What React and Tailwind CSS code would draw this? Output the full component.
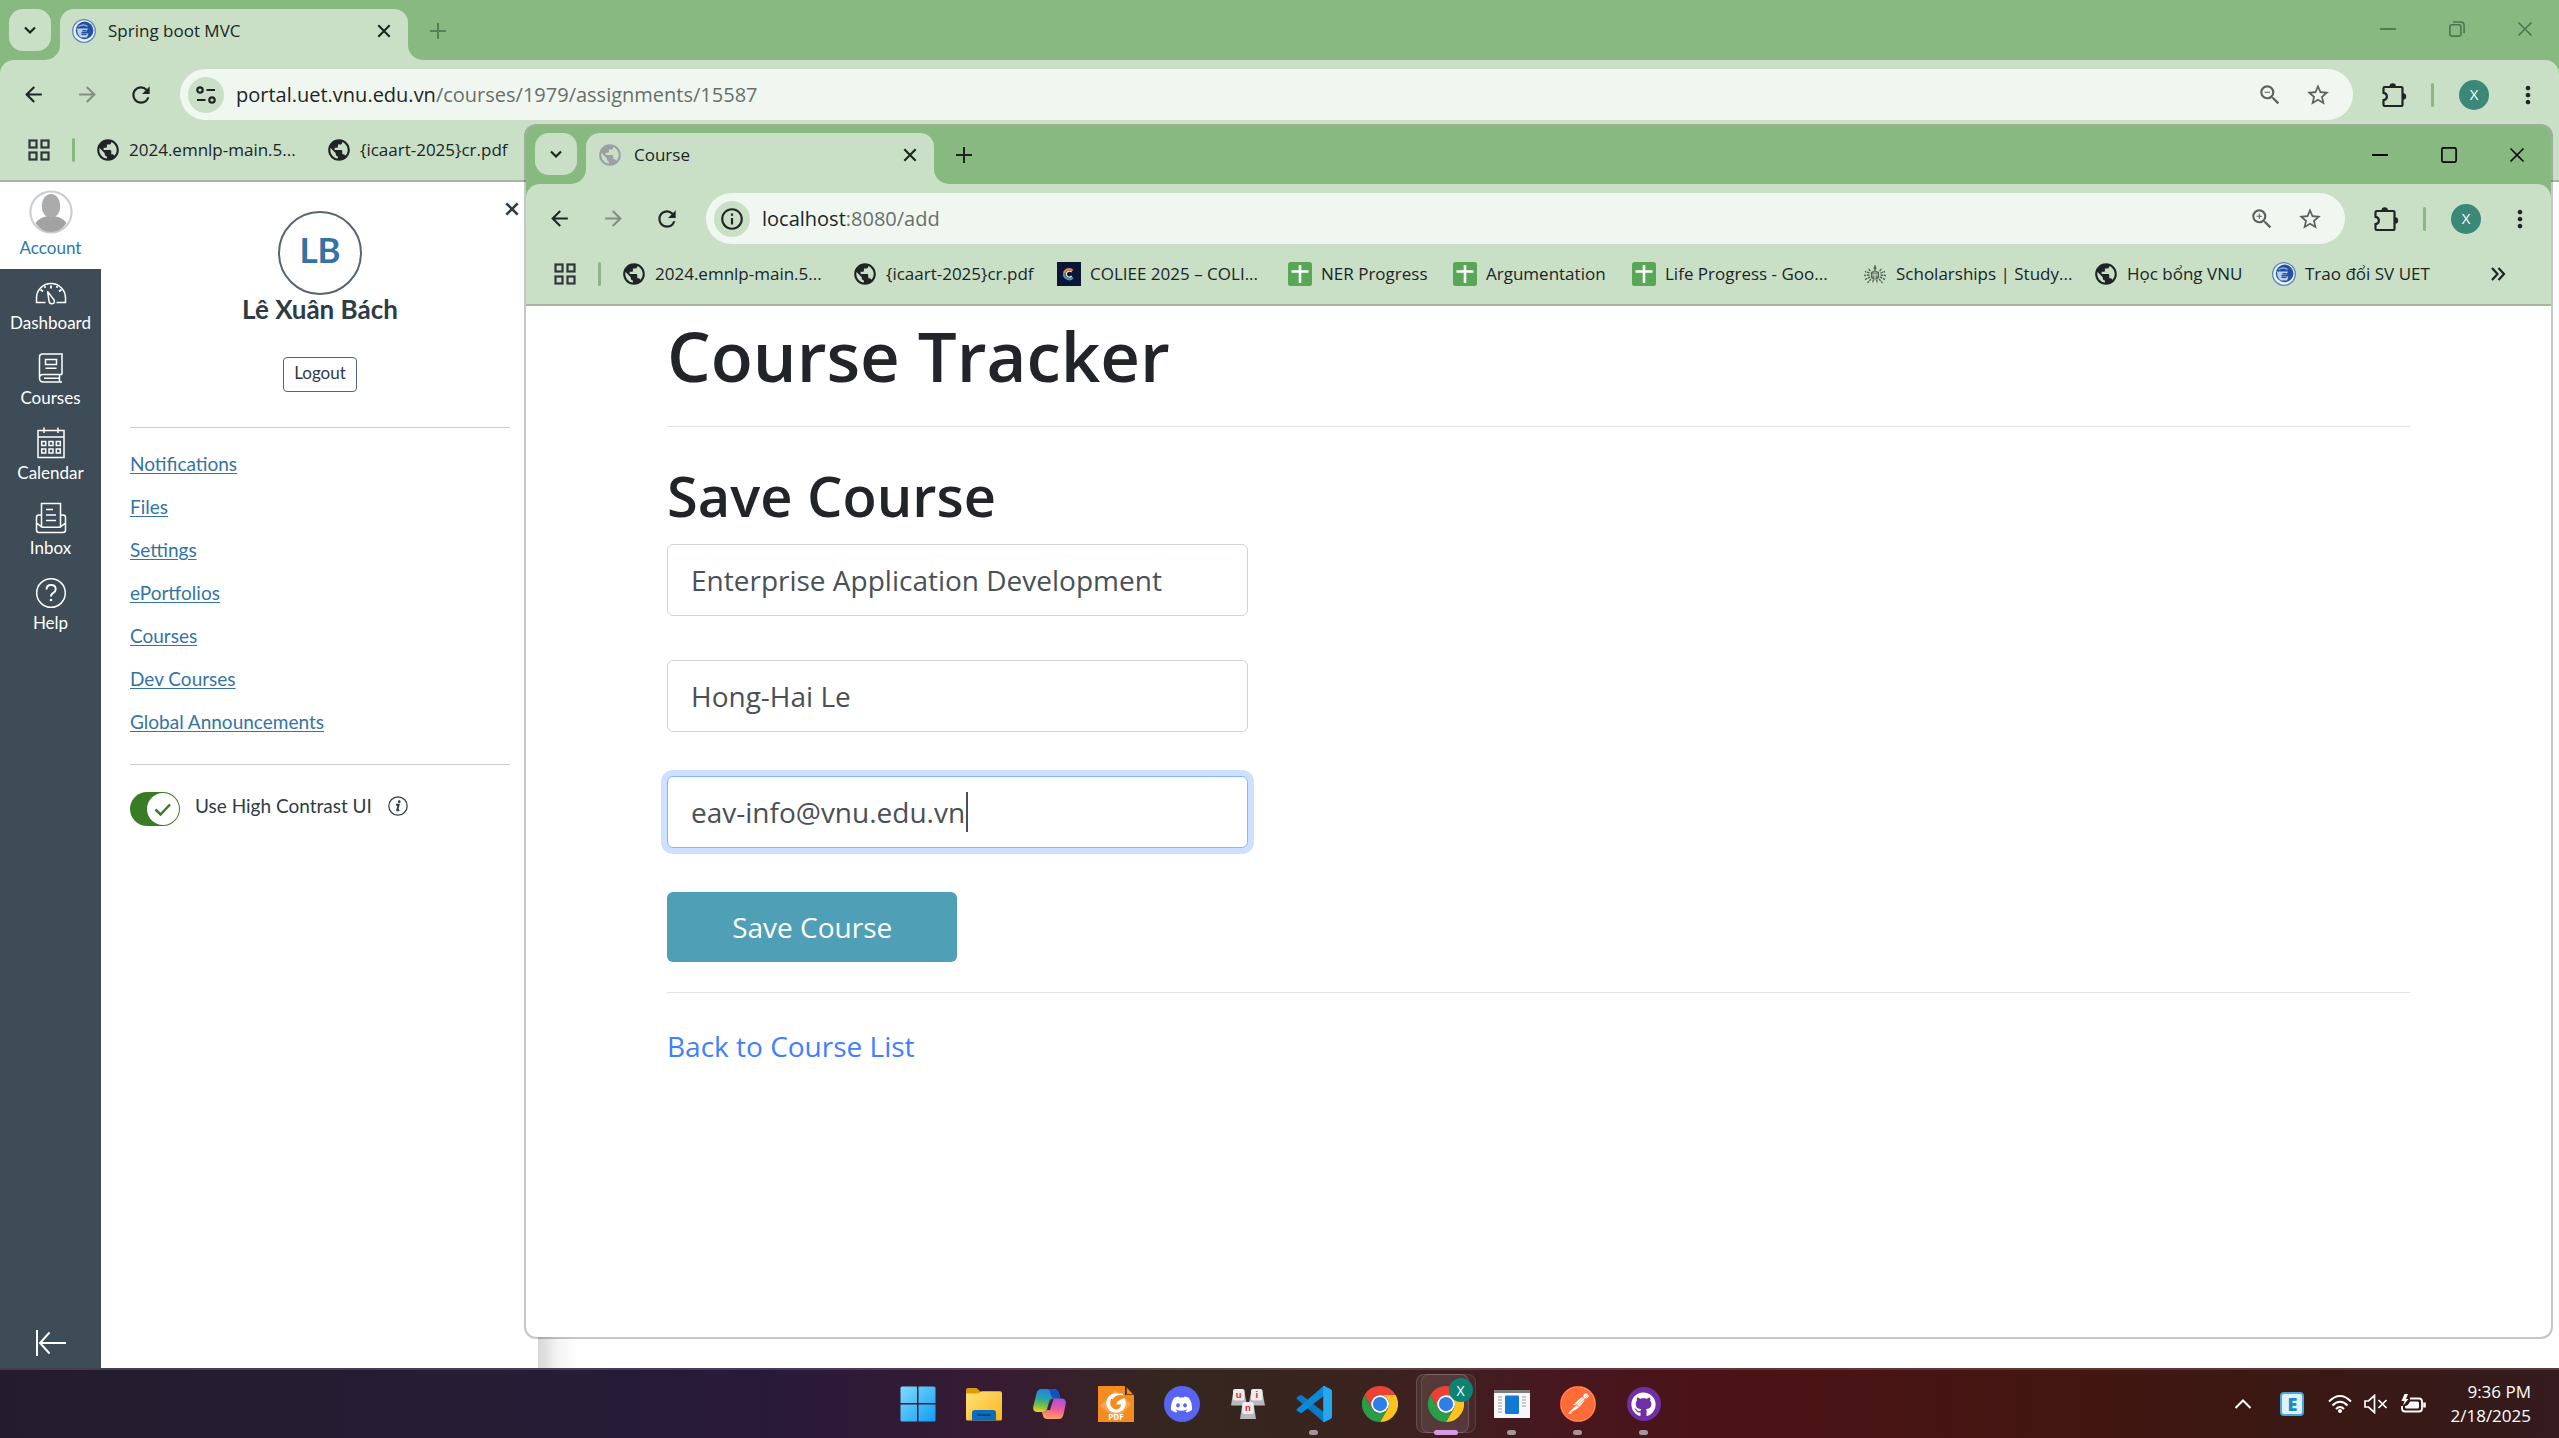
import React from "react";
import {
  MdArrowBack,
  MdArrowForward,
  MdInfoOutline,
  MdMoreVert,
  MdPublic,
  MdRefresh,
  MdStarBorder,
  MdZoomIn,
  MdZoomOut,
} from "react-icons/md";
import { FaDiscord, FaGithub } from "react-icons/fa";
import { SiPostman } from "react-icons/si";

/* ---------- small drawings ---------- */

function UniversityLogo() {
  return (
    <svg viewBox="0 0 24 24" className="size-6 shrink-0">
      <circle cx="12" cy="12" r="11.3" fill="#eaf1fa" stroke="#5f84ba" strokeWidth="1.3" />
      <circle cx="12.6" cy="11.4" r="8.8" fill="#24519f" />
      <path d="M5 9.500h11l-1.500 3H10l-1 2h7.500l-1.500 4H9q-4-2-4-9z" fill="#b9d0ec" />
      <path d="M10.500 11.500h4M9.500 15.500h5" fill="none" stroke="#24519f" strokeWidth="1.200" />
      <path d="M6.500 7.500q5-3 9 0" fill="none" stroke="#8fb1de" strokeWidth="1.400" />
    </svg>
  );
}

function SheetsIcon() {
  return (
    <svg viewBox="0 0 24 24" className="size-6 shrink-0">
      <rect width="24" height="24" rx="2.5" fill="#57a757" />
      <path d="M3.5 9.5h17M12 3v18" stroke="#fff" strokeWidth="2.6" />
    </svg>
  );
}

function CompetitionIcon() {
  return (
    <svg viewBox="0 0 24 24" className="size-6 shrink-0">
      <rect width="24" height="24" fill="#0a1633" />
      <path d="M15.6 8.6A5 5 0 0 0 7.2 11" fill="none" stroke="#e8894a" strokeWidth="2.4" />
      <path d="M7.2 11a5 5 0 0 0 8.6 4.4" fill="none" stroke="#4a90c8" strokeWidth="2.4" />
      <path d="M14.6 10.2a3 3 0 1 0 0 3.8" fill="none" stroke="#f4e3c8" strokeWidth="1.3" />
    </svg>
  );
}

function CrestIcon() {
  return (
    <svg viewBox="0 0 24 24" className="size-6 shrink-0" fill="none" stroke="#596555">
      <path d="M12 3l1.300 3-1.300 3-1.300-3z" fill="#596555" strokeWidth="0.500" />
      <path d="M8.500 10.500q3.500-3 7 0v5q-3.500 3-7 0z" fill="#7d8b78" strokeWidth="1.200" />
      <path d="M12 9.500v8M9 13h6" stroke="#c9e0c6" strokeWidth="0.900" />
      <path
        d="M7.500 9L5 6.500M6.500 11L2 9.500M6.500 13L1 13.500M7 15l-5 2.500M8 17l-3.500 4M16.500 9L19 6.500M17.500 11L22 9.500M17.500 13l5.500.5M17 15l5 2.500M16 17l3.500 4M10.500 17.500L9.500 21M13.500 17.500l1 3.500"
        strokeWidth="1.400"
        strokeDasharray="2.500 0.700"
      />
    </svg>
  );
}

function AppsGridIcon() {
  return (
    <svg viewBox="0 0 24 24" className="size-6 shrink-0" fill="none" stroke="#30363a" strokeWidth="2.2">
      <rect x="2.500" y="2.500" width="7" height="7" />
      <rect x="14.500" y="2.500" width="7" height="7" />
      <rect x="2.500" y="14.500" width="7" height="7" />
      <rect x="14.500" y="14.500" width="7" height="7" />
    </svg>
  );
}

function TuneIcon() {
  return (
    <svg viewBox="0 0 24 24" className="size-6" fill="none" stroke="#202426" strokeWidth="2.2">
      <circle cx="6" cy="7" r="2.700" />
      <path d="M12.500 7H21M3 17h8.500" />
      <circle cx="18" cy="17" r="2.700" />
    </svg>
  );
}

function PuzzleIcon() {
  return (
    <svg viewBox="0 0 28 28" className="size-7" fill="none" stroke="#202426">
      <path
        d="M3.500 7.200a1.200 1.200 0 0 1 1.200-1.200h16.600a1.200 1.200 0 0 1 1.200 1.200v16.600a1.200 1.200 0 0 1-1.200 1.200h-16.600a1.200 1.200 0 0 1-1.200-1.200v-4.600q3.400-.6 3.400-3.700t-3.400-3.700z"
        strokeWidth="2.200"
      />
      <path d="M9.500 5.500a3.200 3.200 0 0 1 6.400 0zM23 12.300a3.200 3.200 0 0 1 0 6.400z" fill="#202426" stroke="none" />
    </svg>
  );
}

function ChevronDown() {
  return (
    <svg viewBox="0 0 14 14" className="size-3.5" fill="none" stroke="#1d2420" strokeWidth="2.200">
      <path d="M2 4.500l5 5 5-5" />
    </svg>
  );
}

function Cross({ className }) {
  return (
    <svg viewBox="0 0 16 16" className={className} fill="none" stroke="currentColor">
      <path d="M1.500 1.500l13 13M14.500 1.500l-13 13" />
    </svg>
  );
}

function Plus() {
  return (
    <svg viewBox="0 0 16 16" className="size-4" fill="none" stroke="currentColor" strokeWidth="2">
      <path d="M8 0v16M0 8h16" />
    </svg>
  );
}

/* ---------- browser window chrome ---------- */

function WindowControls({ maximized }) {
  return (
    <div className={`ml-auto flex h-[58px] ${maximized ? "text-[#4f7550]" : "text-black"}`}>
      <button aria-label="Minimize" className="flex w-[69px] items-center justify-center">
        <svg viewBox="0 0 16 16" className="size-4" stroke="currentColor" strokeWidth="1.800"><path d="M0 8h16" /></svg>
      </button>
      <button aria-label="Maximize" className="flex w-[69px] items-center justify-center">
        <svg viewBox="0 0 16 16" className="size-4" fill="none" stroke="currentColor" strokeWidth="1.600">
          {maximized ? (
            <>
              <rect x="0.900" y="3.800" width="11" height="11.300" rx="2" />
              <path d="M4 1h7.500q3.600 0 3.600 3.600v7.600" />
            </>
          ) : (
            <rect x="0.900" y="0.900" width="14.200" height="14.200" rx="1.500" />
          )}
        </svg>
      </button>
      <button aria-label="Close" className="flex w-[68px] items-center justify-center">
        <Cross className="size-4 stroke-[1.6]" />
      </button>
    </div>
  );
}

function TabStrip({ title, icon, maximized }) {
  return (
    <div className={`flex items-start ${maximized ? "h-[60px]" : "h-[58px]"}`}>
      <div className="flex h-full items-end">
        <button
          aria-label="Search tabs"
          className="relative z-10 mb-[9px] ml-[9px] flex size-[42px] items-center justify-center rounded-[14px] bg-[#c9e0c6]"
        >
          <ChevronDown />
        </button>
        <div className="-ml-1.5 size-[15px] bg-[#c9e0c6]">
          <div className="size-full rounded-br-[15px] bg-[#88b980]" />
        </div>
        <div className="flex h-[51px] w-[348px] items-center gap-3 rounded-t-[14px] bg-[#c9e0c6] px-3 pb-2">
          {icon}
          <span className="text-[17px] text-[#202426]">{title}</span>
          <button aria-label="Close tab" className="ml-auto flex size-6 items-center justify-center text-[#1d2420]">
            <Cross className="size-3.5 stroke-[2.4]" />
          </button>
        </div>
        <div className="size-[15px] bg-[#c9e0c6]">
          <div className="size-full rounded-bl-[15px] bg-[#88b980]" />
        </div>
        <button
          aria-label="New tab"
          className={`flex h-[51px] w-[30px] items-center justify-center pb-2 ${maximized ? "text-[#587f55]" : "text-[#1d2420]"}`}
        >
          <Plus />
        </button>
      </div>
      <WindowControls maximized={maximized} />
    </div>
  );
}

function Toolbar({ host, path, siteIcon, zoomIcon }) {
  return (
    <div className="flex items-center pt-[9px] pl-1.5 text-[#202426]">
      <button aria-label="Back" className="flex w-[54px] justify-center"><MdArrowBack size={25} /></button>
      <button aria-label="Forward" className="flex w-[54px] justify-center text-[#81907f]"><MdArrowForward size={25} /></button>
      <button aria-label="Reload" className="flex w-[54px] justify-center"><MdRefresh size={26} /></button>
      <div className="ml-3 flex h-[51px] flex-1 items-center rounded-full bg-[#f0f7f0] pr-[22px] pl-2">
        <button aria-label="Site information" className="flex size-9 items-center justify-center rounded-full bg-[#c9e0c6]">
          {siteIcon}
        </button>
        <div className="ml-3 flex-1 text-[20px] text-[#202426]">
          {host}
          <span className="text-[#66706a]">{path}</span>
        </div>
        <button aria-label="Zoom" className="mr-[22px] text-[#5b6362]">{zoomIcon}</button>
        <button aria-label="Bookmark this page" className="text-[#5b6362]"><MdStarBorder size={26} /></button>
      </div>
      <button aria-label="Extensions" className="ml-[23px] flex w-9 justify-center"><PuzzleIcon /></button>
      <div className="ml-[19px] h-6 w-[3px] rounded-full bg-[#88b980]" />
      <button aria-label="Profile" className="ml-[25px] flex size-[30px] items-center justify-center rounded-full bg-[#3c8878] text-[15px] text-white">
        X
      </button>
      <button aria-label="Menu" className="mr-[17px] ml-[25px]"><MdMoreVert size={28} /></button>
    </div>
  );
}

const globe = <MdPublic size={26} className="-mx-px shrink-0 text-[#202426]" />;

const frontBookmarks = [
  { label: "2024.emnlp-main.5...", icon: globe, width: "w-[174px]" },
  { label: "{icaart-2025}cr.pdf", icon: globe, width: "w-[147px]" },
  { label: "COLIEE 2025 – COLI...", icon: <CompetitionIcon />, width: "w-[174px]" },
  { label: "NER Progress", icon: <SheetsIcon />, width: "w-[108px]" },
  { label: "Argumentation", icon: <SheetsIcon />, width: "w-[122px]" },
  { label: "Life Progress - Goo...", icon: <SheetsIcon />, width: "w-[174px]" },
  { label: "Scholarships | Study...", icon: <CrestIcon />, width: "w-[174px]" },
  { label: "Học bổng VNU", icon: globe, width: "w-[121px]" },
  { label: "Trao đổi SV UET", icon: <UniversityLogo />, width: "w-[128px]" },
];

function Bookmarks({ items, more }) {
  return (
    <nav aria-label="Bookmarks" className="flex h-[62px] items-center border-b-2 border-[#a3b89f] pl-[27px]">
      <button aria-label="Apps"><AppsGridIcon /></button>
      <div className="mr-[21px] ml-[21px] h-6 w-[3px] rounded-full bg-[#88b980]" />
      <ul className="flex gap-6">
        {items.map((b) => (
          <li key={b.label}>
            <a href="#" className="flex items-center gap-[9px]">
              {b.icon}
              <span className={`whitespace-nowrap text-[17px] text-[#202426] ${b.width}`}>{b.label}</span>
            </a>
          </li>
        ))}
      </ul>
      {more && (
        <button aria-label="More bookmarks" className="mr-[45px] ml-auto">
          <svg viewBox="0 0 16 16" className="size-4" fill="none" stroke="#202426" strokeWidth="2.200">
            <path d="M2 2l5.500 6-5.500 6M8.500 2l5.500 6-5.500 6" />
          </svg>
        </button>
      )}
    </nav>
  );
}

/* ---------- learning portal (rear window) ---------- */

function NavSvg({ children }) {
  return (
    <svg viewBox="0 0 32 32" className="size-8" fill="none" stroke="#fff" strokeWidth="1.500">
      {children}
    </svg>
  );
}

const navItems = [
  {
    label: "Dashboard",
    icon: (
      <NavSvg>
        <path d="M10.500 25.500H1.500v-4.500a14.500 14.500 0 0 1 29 0v4.500h-9" />
        <path d="M12.500 14.500l6.700 8.600q.9 3.200-1.900 3.600t-3.200-2.300z" />
        <path d="M16 8.500v3M5.500 12.500l2.500 2M26.500 12.500l-2.500 2M9.500 9.200l1 1.500M22.500 9.200l-1 1.500" strokeWidth="1.800" />
      </NavSvg>
    ),
  },
  {
    label: "Courses",
    icon: (
      <NavSvg>
        <path d="M27 22.500V2H7.500Q4.500 2 4.500 5v21q0 4 4 4H27M27 22.500H8q-3.500 0-3.500 3.500M24.500 23v6.500M9 26.300h15" />
        <path d="M10.500 7.500h11v5h-11zM10.500 16.300h11" />
      </NavSvg>
    ),
  },
  {
    label: "Calendar",
    icon: (
      <NavSvg>
        <path d="M3 3.500h26v27H3zM3 10h26M9 .500v5.500M23 .500v5.500" />
        <path d="M6.700 14.500h4v4h-4zM14 14.500h4v4h-4zM21.300 14.500h4v4h-4zM6.700 22h4v4h-4zM14 22h4v4h-4zM21.300 22h4v4h-4z" />
      </NavSvg>
    ),
  },
  {
    label: "Inbox",
    icon: (
      <NavSvg>
        <path d="M6.500 25V1.500h19V25" />
        <path d="M6.500 13H4q-2.500 0-2.500 2.500v12.500q0 2.500 2.500 2.500h24q2.500 0 2.500-2.500V15.500q0-2.500-2.500-2.500h-2.500M1.500 21l5.500 4.200h18l5.500-4.200" />
        <path d="M11 7.500h7M11 13h10M11 18.500h10" />
      </NavSvg>
    ),
  },
  {
    label: "Help",
    icon: (
      <NavSvg>
        <circle cx="16" cy="16" r="14.300" />
        <path d="M11.500 12.500q0-4.500 4.600-4.500t4.600 4.200q0 2.300-2.400 3.600t-2.300 3.700" strokeWidth="1.900" />
        <circle cx="16" cy="23" r="1.300" fill="#fff" stroke="none" />
      </NavSvg>
    ),
  },
];

const trayLinks = [
  "Notifications",
  "Files",
  "Settings",
  "ePortfolios",
  "Courses",
  "Dev Courses",
  "Global Announcements",
];

function GlobalNav() {
  return (
    <nav aria-label="Global navigation" className="flex w-[101px] flex-col bg-[#3d4c57] text-[17px]/5 text-white">
      <a href="#" className="flex h-[87px] flex-col items-center gap-1 bg-white pt-2 text-[#2d78a8]">
        <svg viewBox="0 0 44 44" className="size-11">
          <circle cx="22" cy="22" r="20.600" fill="#fff" stroke="#c7cdd1" strokeWidth="2" />
          <ellipse cx="22" cy="16" rx="9.300" ry="12" fill="#ababab" />
          <path d="M6.500 33q4-5.500 11-6.500 4.500 1.500 9 0 7 1 11 6.500-6 9-15.500 9t-15.500-9z" fill="#a2a2a2" />
        </svg>
        Account
      </a>
      {navItems.map((n) => (
        <a key={n.label} href="#" className="flex h-[75px] flex-col items-center gap-1 pt-2">
          {n.icon}
          {n.label}
        </a>
      ))}
      <button aria-label="Minimize navigation" className="mt-auto mb-[11px] flex justify-center">
        <svg viewBox="0 0 32 28" className="h-7 w-8" fill="none" stroke="#fff" strokeWidth="2">
          <path d="M2 1v26M5 14h26M14.500 3.500l-9.500 10.500 9.500 10.500" />
        </svg>
      </button>
    </nav>
  );
}

function AccountTray() {
  return (
    <aside className="relative w-[437px] bg-white pr-7 pl-[29px] text-[#2d3b45]">
      <button aria-label="Close" className="absolute top-5 right-[19px]">
        <Cross className="size-3.5 stroke-[3]" />
      </button>
      <div className="flex flex-col items-center pt-[29px]">
        <div className="flex size-[84px] items-center justify-center rounded-full border-2 border-[#556572] pb-2 text-[35px] font-bold text-[#3573a5]">
          LB
        </div>
        <h2 className="text-[26px]/7 font-bold">Lê Xuân Bách</h2>
        <button className="mt-[34px] h-[35px] rounded-[4px] border border-[#556572] px-2.5 pb-1 text-[17px]">Logout</button>
      </div>
      <hr className="mt-[35px] border-[#c7cdd1]" />
      <ul className="mt-[15px] text-[19px]">
        {trayLinks.map((l) => (
          <li key={l} className="flex h-[43px] items-center">
            <a href="#" className="text-[#3573a5] underline underline-offset-2">{l}</a>
          </li>
        ))}
      </ul>
      <hr className="mt-5 border-[#c7cdd1]" />
      <div className="mt-[27px] flex items-start">
        <div className="relative h-[34px] w-[50px]">
          <input
            id="contrast"
            type="checkbox"
            defaultChecked
            className="block h-[34px] w-[50px] appearance-none rounded-full bg-[#3a7c26]"
          />
          <svg viewBox="0 0 32 32" className="pointer-events-none absolute top-px right-px size-8" fill="none">
            <circle cx="16" cy="16" r="16" fill="#fff" />
            <path d="M8.500 16.500l5 5 9.500-10" stroke="#3a7c26" strokeWidth="2.500" />
          </svg>
        </div>
        <label htmlFor="contrast" className="ml-[15px] text-[19px]/7">Use High Contrast UI</label>
        <svg viewBox="0 0 20 20" className="mt-1 ml-4 size-5" fill="none" stroke="#2d3b45">
          <circle cx="10" cy="10" r="9.200" strokeWidth="1.200" />
          <path d="M8 8.700h2.700l-1.500 5q-.2 1.300 2 .2" strokeWidth="1.900" />
          <circle cx="11.200" cy="5.700" r="1.400" fill="#2d3b45" stroke="none" />
        </svg>
      </div>
    </aside>
  );
}

function PortalWindow() {
  return (
    <section className="flex flex-1 flex-col bg-[#88b980]">
      <TabStrip title="Spring boot MVC" icon={<UniversityLogo />} maximized />
      <div className="rounded-t-[14px] bg-[#c9e0c6]">
        <Toolbar
          host="portal.uet.vnu.edu.vn"
          path="/courses/1979/assignments/15587"
          siteIcon={<TuneIcon />}
          zoomIcon={<MdZoomOut size={26} />}
        />
        <Bookmarks items={frontBookmarks.slice(0, 2)} />
      </div>
      <div className="flex flex-1 bg-white font-['Lato',sans-serif]">
        <GlobalNav />
        <AccountTray />
        <div className="w-10 bg-linear-to-r from-[#d6d6d6] via-[#f4f4f4] to-white" />
      </div>
    </section>
  );
}

/* ---------- course tracker (front window) ---------- */

const fieldClass =
  "block h-[72px] w-full rounded-md border bg-white px-[23px] text-[28px] text-[#495057] outline-none";

function CourseWindow() {
  return (
    <section className="absolute top-[124px] right-1.5 bottom-[99px] left-[524px] flex flex-col overflow-hidden rounded-xl border-2 border-black/22 bg-[#88b980] bg-clip-padding">
      <TabStrip title="Course" icon={<MdPublic size={26} className="-mx-px text-[#9aa0a6]" />} />
      <div className="rounded-t-[14px] bg-[#c9e0c6]">
        <Toolbar
          host="localhost"
          path=":8080/add"
          siteIcon={<MdInfoOutline size={26} />}
          zoomIcon={<MdZoomIn size={26} />}
        />
        <Bookmarks items={frontBookmarks} more />
      </div>
      <main className="flex-1 bg-white px-[141px] pt-1 text-[28px] text-[#212529]">
        <h1 className="text-[69px]/[90px] font-semibold">Course Tracker</h1>
        <hr className="mt-[26px] border-[#e2e3e4]" />
        <h2 className="mt-8 text-[56px]/[72px] font-semibold">Save Course</h2>
        <form className="mt-[13px]" onSubmit={(e) => e.preventDefault()}>
          <div className="flex w-1/3 flex-col gap-11">
            <input aria-label="Course name" defaultValue="Enterprise Application Development" className={`${fieldClass} border-[#ced4da]`} />
            <input aria-label="Instructor" defaultValue="Hong-Hai Le" className={`${fieldClass} border-[#ced4da]`} />
            <div className="relative">
              <input
                aria-label="Email"
                defaultValue="eav-info@vnu.edu.vn"
                className={`${fieldClass} border-[#86b7fe] ring-[6px] ring-[#cfe0ff]`}
              />
              <span className="absolute top-4 left-[299px] h-10 w-0.5 bg-[#495057]" />
            </div>
          </div>
          <button type="submit" className="mt-11 h-[70px] w-1/6 rounded-md bg-[#4fa0b6] text-white">
            Save Course
          </button>
        </form>
        <hr className="mt-[30px] border-[#e2e3e4]" />
        <a href="#" className="mt-8 inline-block text-[#4080ff]">Back to Course List</a>
      </main>
    </section>
  );
}

/* ---------- taskbar ---------- */

function WindowsIcon() {
  return (
    <svg viewBox="0 0 36 36" className="size-9">
      <defs>
        <linearGradient id="win" x1="0" y1="0" x2="1" y2="1" gradientUnits="objectBoundingBox">
          <stop offset="0" stopColor="#7fdcff" />
          <stop offset="1" stopColor="#109cf5" />
        </linearGradient>
      </defs>
      <path d="M2 .500h15v16.500H.500V2q0-1.500 1.500-1.500zM18.500.500H34q1.500 0 1.500 1.500v15h-17zM.500 18.500H17v17H2q-1.500 0-1.500-1.500zM18.500 18.500h17V34q0 1.500-1.500 1.500H18.500z" fill="url(#win)" />
    </svg>
  );
}

function FolderIcon() {
  return (
    <svg viewBox="0 0 36 36" className="size-9">
      <defs>
        <linearGradient id="fold" x1="0" y1="0" x2="1" y2="1">
          <stop offset="0" stopColor="#ffe07a" />
          <stop offset="1" stopColor="#f8b91a" />
        </linearGradient>
      </defs>
      <path d="M0 4q0-2 2-2h8.500l5 4.500v4H0z" fill="#dc9b05" />
      <path d="M0 7.500h12l3.500-2.300H34q2 0 2 2V33q0 1.500-1.500 1.500h-33Q0 34.500 0 33z" fill="url(#fold)" />
      <path d="M6 34.500V27q0-3 3-3h18q3 0 3 3v7.500z" fill="#0f6cbd" />
      <path d="M11.500 29h13" stroke="#0a3f7a" strokeWidth="1.500" />
    </svg>
  );
}

function CopilotIcon() {
  return (
    <svg viewBox="0 0 36 36" className="size-9">
      <defs>
        <linearGradient id="cpA" x1="0.500" y1="0" x2="0.300" y2="1">
          <stop offset="0" stopColor="#1f7fe8" />
          <stop offset="0.450" stopColor="#2aa6a0" />
          <stop offset="0.750" stopColor="#7cc043" />
          <stop offset="1" stopColor="#f3cf2a" />
        </linearGradient>
        <linearGradient id="cpB" x1="0.600" y1="0" x2="0.400" y2="1">
          <stop offset="0" stopColor="#a552e0" />
          <stop offset="0.500" stopColor="#ec5a9a" />
          <stop offset="1" stopColor="#ffa45c" />
        </linearGradient>
      </defs>
      <path d="M9 3h13q3.500 0 4.600 3.500l1.800 6h-7.200q-3 0-4 3l-2.200 7.500q-1 3-4 3H5q-5-.5-3.600-6L4.500 7.500Q5.700 3 9 3z" fill="url(#cpA)" />
      <path d="M20 3q5.500 0 6.600 3.500l1.800 6h-6q-3-.5-4-5.500-.8-4-3.400-4z" fill="#1450c0" />
      <path d="M27 33H15.500q-3.500 0-4.500-3l-1-4q4 .5 5.200-3l2.700-8q1-2.500 4-2.500h8q5 .5 3.700 6L31.500 28.500Q30.300 33 27 33z" fill="url(#cpB)" />
      <path d="M17 17.500l2.500-4.500h2l-3.500 11h-3z" fill="#38203a" />
    </svg>
  );
}

function FoxitIcon() {
  return (
    <svg viewBox="0 0 36 36" className="size-9">
      <path d="M0 0h27v9h9v27H0z" fill="#f68b1f" />
      <path d="M28.500 1l7 7.500h-7z" fill="#f68b1f" stroke="#6b3a10" strokeWidth="0.800" />
      <path d="M17 4l16 14-14 15L2 20z" fill="#fbb873" opacity="0.600" />
      <circle cx="18" cy="17" r="9.800" fill="#fff" />
      <path d="M27.500 9.500q-9-3-13.500 2-3.500 5-.5 9.500 3.500 4 7.500 1.500 2-1.500 2-4h-4.500q0-4 7-6z" fill="#f68b1f" />
      <path d="M25 8.500q-8-1-11 4.500" fill="none" stroke="#fff" strokeWidth="1.500" />
      <text x="18" y="33.500" textAnchor="middle" fontSize="8" fontWeight="700" fill="#fff" fontFamily="Open Sans, sans-serif">PDF</text>
    </svg>
  );
}

function KeysIcon() {
  return (
    <svg viewBox="0 0 36 32" className="h-8 w-9" fontFamily="Liberation Sans, sans-serif" fontWeight="700" fontSize="9.500" textAnchor="middle">
      <g fill="#b9b9b9">
        <path d="M3.500 2h10.500l3 15.500H1z" />
        <path d="M21.500 2H32l3 15.500H18.500z" />
        <path d="M12.500 15.500h11l2.500 15.500H10z" />
      </g>
      <g fill="#ececec">
        <rect x="3" y="1" width="11.500" height="11.500" rx="2" />
        <rect x="21" y="1" width="11.500" height="11.500" rx="2" />
        <rect x="12.200" y="14" width="11.500" height="12" rx="2" />
      </g>
      <g fill="#e5252f">
        <text x="8.700" y="9.500">u</text>
        <text x="26.800" y="9.800">i</text>
        <text x="18" y="22.500">n</text>
      </g>
    </svg>
  );
}

function CodeIcon() {
  return (
    <svg viewBox="0 0 36 36" className="size-9">
      <path d="M1 11.200l3-2q1.200-.7 2.300.2L29 27v9q-1.500.2-2.700-.9L.900 13q-1-1 .1-1.800z" fill="#0a7ac4" />
      <path d="M1 24.800l3 2q1.200.7 2.300-.2L29 9V0q-1.500-.2-2.700.9L.900 23q-1 1 .1 1.800z" fill="#0b88d6" />
      <path d="M27 .500q.6-.8 1.500-.4l6 3q1.500.7 1.500 2.200v25.400q0 1.500-1.500 2.200l-6 3q-1 .4-2-.4.700.1.700-1.200V1.700q0-1-.2-1.200z" fill="#27a7f0" />
    </svg>
  );
}

function ChromeIcon() {
  return (
    <svg viewBox="0 0 48 48" className="size-9">
      <circle cx="24" cy="24" r="12" fill="#fff" />
      <path d="M24,12H44.781a23.994,23.994,0,0,0-41.564.003L13.608,30l.009-.002A11.985,11.985,0,0,1,24,12Z" fill="#ea4335" />
      <path d="M34.391,30.003,24.001,48A23.994,23.994,0,0,0,44.780,12.003H23.999l-.003.009A11.985,11.985,0,0,1,34.391,30.003Z" fill="#fcc31e" />
      <path d="M13.609,30.003,3.218,12.006A23.994,23.994,0,0,0,24.003,48L34.393,30.003l-.007-.007a11.985,11.985,0,0,1-20.778.007Z" fill="#2a9d48" />
      <circle cx="24" cy="24" r="9.500" fill="#2f7de9" />
    </svg>
  );
}

function AppWindowIcon() {
  return (
    <svg viewBox="0 0 36 28" className="h-7 w-9">
      <rect width="36" height="28" fill="#f7f7f7" />
      <rect width="36" height="3" fill="#7d7d7d" />
      <path d="M4 7h4M4 10h4M4 13h4M4 16h4M4 19h4M4 22h4M28 7h4M28 10h4M28 13h4M28 16h4" stroke="#c9c9c9" strokeWidth="1.800" />
      <rect x="11" y="5.500" width="14" height="18.500" rx="1" fill="#1479d2" />
    </svg>
  );
}

const taskbarApps = [
  { name: "Start", icon: <WindowsIcon /> },
  { name: "File Explorer", icon: <FolderIcon /> },
  { name: "Copilot", icon: <CopilotIcon /> },
  { name: "PDF Reader", icon: <FoxitIcon /> },
  {
    name: "Discord",
    icon: (
      <span className="flex size-9 items-center justify-center rounded-full bg-[#5865f2] text-white">
        <FaDiscord size={23} />
      </span>
    ),
  },
  { name: "UniKey", icon: <KeysIcon /> },
  { name: "Visual Studio Code", icon: <CodeIcon />, running: true },
  { name: "Chrome", icon: <ChromeIcon /> },
  { name: "Chrome profile", icon: <ChromeIcon />, active: true },
  { name: "Application", icon: <AppWindowIcon />, running: true },
  {
    name: "Postman",
    icon: (
      <span className="flex size-9 items-center justify-center rounded-full bg-[#ff6c37]">
        <span className="flex size-[34px] rounded-full bg-white">
          <SiPostman size={34} className="text-[#ff6c37]" />
        </span>
      </span>
    ),
    running: true,
  },
  {
    name: "GitHub Desktop",
    icon: (
      <span className="flex size-[34px] items-center justify-center rounded-full bg-[#702fa5] text-white">
        <FaGithub size={25} />
      </span>
    ),
    running: true,
  },
];

function Taskbar() {
  return (
    <footer className="grid h-[70px] grid-cols-[1fr_auto_1fr] items-center border-t-2 border-white/15 bg-[linear-gradient(90deg,#241c2e_0%,#241d34_20%,#291939_30%,#371b33_39%,#35271f_46%,#3b221f_54%,#47171f_61%,#4b1216_68%,#431611_80%,#3a1813_90%,#341b1d_100%)] bg-origin-border text-white">
      <div />
      <ul className="flex pl-0.5">
        {taskbarApps.map((a) => (
          <li key={a.name} className="relative flex h-[68px] w-[66px] items-center justify-center">
            {a.active && (
              <>
                <span className="absolute top-1 left-2 h-[59px] w-[55px] rounded-lg border border-white/10 bg-white/5" />
                <span className="absolute top-1 left-[3px] h-[59px] w-[53px] rounded-lg border border-white/15 bg-white/8" />
              </>
            )}
            <button aria-label={a.name} className="relative">{a.icon}</button>
            {a.active && (
              <span className="absolute top-2 right-1.5 flex size-6 items-center justify-center rounded-full bg-[#0b8374] text-[14px] text-white">
                X
              </span>
            )}
            {a.running && <span className="absolute bottom-[3px] h-[5px] w-[9px] rounded-full bg-[#a79699]" />}
            {a.active && <span className="absolute bottom-[3px] h-[5px] w-6 rounded-full bg-[#d79ae3]" />}
          </li>
        ))}
      </ul>
      <div className="flex items-center justify-end pr-7">
        <button aria-label="Show hidden icons" className="mr-7">
          <svg viewBox="0 0 18 18" className="size-[18px]" fill="none" stroke="#fff" strokeWidth="2">
            <path d="M1.500 13L9 5.500l7.500 7.500" />
          </svg>
        </button>
        <span className="mr-6 flex size-6 items-center justify-center rounded-sm border-2 border-[#49a6dc] bg-[#dff2fc] text-[18px]/5 font-extrabold text-[#2587c4]">
          E
        </span>
        <button aria-label="Network, volume and battery" className="flex items-center">
          <svg viewBox="0 0 24 20" className="h-5 w-6" fill="none" stroke="#fff" strokeWidth="2">
            <path d="M1 7.500Q12-3.500 23 7.500M4.500 11.500q7.500-7.500 15 0M8 15q4-4 8 0" />
            <circle cx="12" cy="17" r="2" fill="#fff" stroke="none" />
          </svg>
          <svg viewBox="0 0 24 20" className="ml-3 h-5 w-6" fill="none" stroke="#fff" strokeWidth="1.700">
            <path d="M1 7h3.500L10.500 1.500v17L4.500 13H1zM14.500 6l8 8M22.500 6l-8 8" />
          </svg>
          <svg viewBox="0 0 26 22" className="ml-3 h-[22px] w-[26px]" fill="none" stroke="#fff" strokeWidth="1.800">
            <path d="M10 5.500h9q3 0 3 3v7q0 3-3 3H5q-3 0-3-3V13" />
            <path d="M10 8.500h7.500q1.500 0 1.500 1.500v4q0 1.500-1.500 1.500h-11q-1.500 0-1.500-1.500V13q3 0 5-4.500z" fill="#fff" stroke="none" />
            <path d="M24.500 9.500v5" strokeWidth="2.600" />
            <path d="M4.500 1L1.500 8h3L3 12.500 8.500 6H6L8 1z" fill="#fff" stroke="none" />
          </svg>
        </button>
        <div className="ml-6 text-right text-[17px]/6">
          <div>9:36 PM</div>
          <div>2/18/2025</div>
        </div>
      </div>
    </footer>
  );
}

export default function App() {
  return (
    <div className="relative flex min-h-screen flex-col font-['Open_Sans','Noto_Sans',sans-serif]">
      <PortalWindow />
      <CourseWindow />
      <Taskbar />
    </div>
  );
}
